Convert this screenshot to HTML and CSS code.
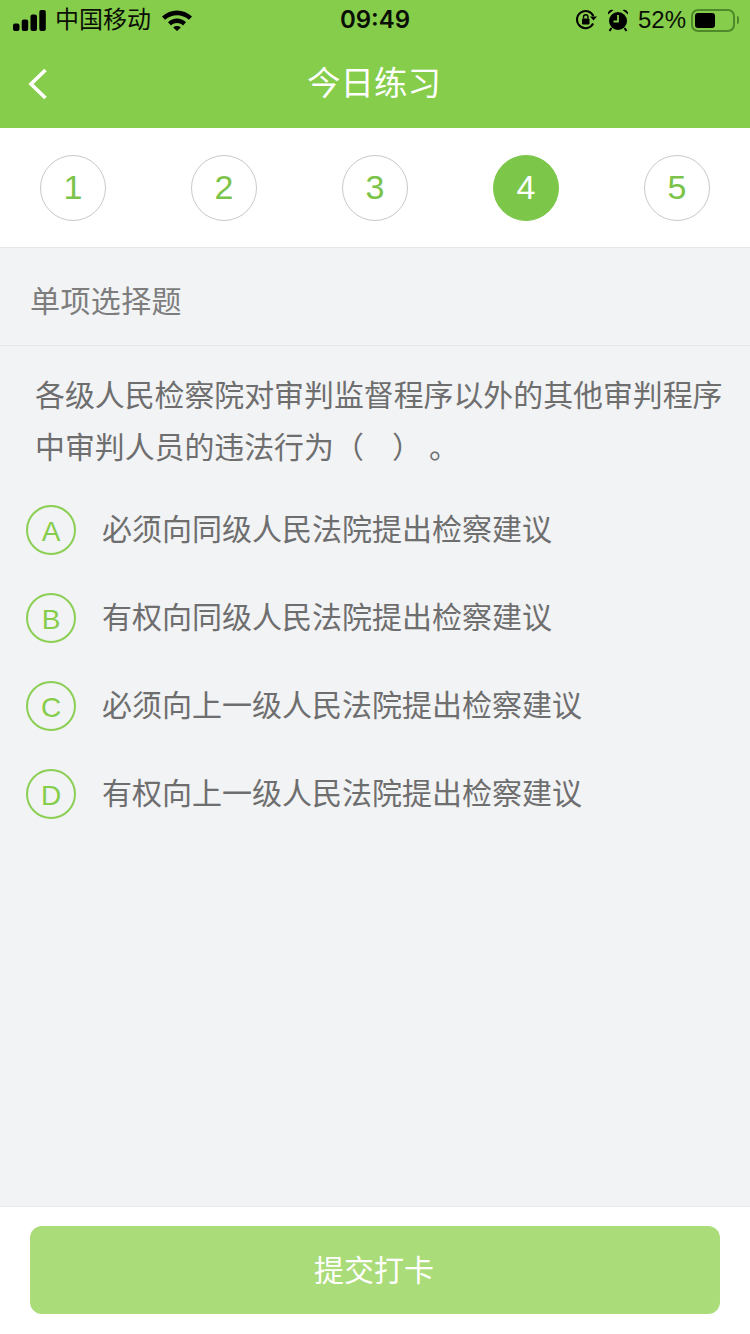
FILE: index.html
```html
<!DOCTYPE html>
<html lang="zh-CN">
<head>
<meta charset="utf-8">
<title>今日练习</title>
<link rel="stylesheet" href="styles.css">
</head>
<body>
<div class="page">
  <header class="head">
    <div class="status">
      <div class="status-left">
        <svg class="signal" width="36" height="23" viewBox="0 0 36 23"><rect x="1" y="14.500" width="6.500" height="7.500" rx="2"/><rect x="9.700" y="10.500" width="6.500" height="11.500" rx="2"/><rect x="18.500" y="5.500" width="6.500" height="16.500" rx="2"/><rect x="27.300" y="1" width="6.500" height="21" rx="2"/></svg>
        <span class="carrier">中国移动</span>
        <svg class="wifi" width="30" height="22" viewBox="0 0 30 22"><path d="M0 7.500C8.500-.5 21.500-.5 30 7.500L27 10.800C20.200 4.600 9.800 4.600 3 10.800Z"/><path d="M6 13.200C11.200 8.400 18.800 8.400 24 13.200L21 16.400C17.400 13.200 12.600 13.200 9 16.400Z"/><path d="M11.200 18.400C13.400 16.600 16.600 16.600 18.800 18.400L15 22Z"/></svg>
      </div>
      <div class="time">09:49</div>
      <div class="status-right">
        <svg class="lock" width="22" height="22" viewBox="0 0 22 22"><path d="M18.200 14.500A8.600 8.600 0 1 1 18.400 7" fill="none" stroke="#000" stroke-width="2"/><path d="M15 7.500h7l-3.500 4z"/><rect x="7" y="9.500" width="7.500" height="6" rx="1"/><path d="M8.500 9.500V8a2.200 2.200 0 0 1 4.500 0v1.500" fill="none" stroke="#000" stroke-width="1.400"/></svg>
        <svg class="alarm" width="22" height="24" viewBox="0 0 22 24"><circle cx="11" cy="13" r="9"/><path d="M1 6.500A4 4 0 0 1 6.500 2ZM21 6.500A4 4 0 0 0 15.500 2Z"/><path d="M4.500 20l-2 3M17.500 20l2 3" stroke="#000" stroke-width="2"/><path d="M11 7v6.500H6.500" fill="none" stroke="#86cd4b" stroke-width="1.800"/></svg>
        <span class="pct">52%</span>
        <div class="battery"><div class="battery-fill"></div></div>
        <div class="battery-tip"></div>
      </div>
    </div>
    <nav class="nav">
      <svg class="back" width="22" height="34" viewBox="0 0 22 34"><path d="M18.500 3L4 17l14.500 14" fill="none" stroke="#fff" stroke-width="3.600"/></svg>
      <h1 class="title">今日练习</h1>
    </nav>
  </header>

  <section class="steps">
    <div class="step">1</div>
    <div class="step">2</div>
    <div class="step">3</div>
    <div class="step step-on">4</div>
    <div class="step">5</div>
  </section>

  <main class="main">
    <div class="kind">单项选择题</div>
    <p class="question">各级人民检察院对审判监督程序以外的其他审判程序中审判人员的违法行为（&nbsp;&nbsp;&nbsp;&nbsp;）&nbsp;。</p>
    <ul class="options">
      <li class="option"><span class="letter">A</span><span class="opt-text">必须向同级人民法院提出检察建议</span></li>
      <li class="option"><span class="letter">B</span><span class="opt-text">有权向同级人民法院提出检察建议</span></li>
      <li class="option"><span class="letter">C</span><span class="opt-text">必须向上一级人民法院提出检察建议</span></li>
      <li class="option"><span class="letter">D</span><span class="opt-text">有权向上一级人民法院提出检察建议</span></li>
    </ul>
  </main>

  <footer class="foot">
    <button class="submit" type="button">提交打卡</button>
  </footer>
</div>
</body>
</html>
```
FILE: styles.css
```css
* { box-sizing: border-box; }
html, body { margin: 0; padding: 0; }
body {
  width: 750px;
  height: 1334px;
  overflow: hidden;
  font-family: "Liberation Sans", "Noto Sans CJK SC", sans-serif;
  background: #f2f3f5;
}
.page { display: flex; flex-direction: column; height: 1334px; }

.head { background: #86cd4b; height: 128px; flex: none; }
.status {
  height: 40px;
  display: flex;
  align-items: center;
  justify-content: space-between;
  padding: 0 11px 0 12px;
  color: #0a0f05;
  position: relative;
}
.status-left { display: flex; align-items: center; }
.signal { fill: #000; margin-right: 7px; }
.carrier { font-size: 24px; line-height: 40px; width: 97px; white-space: nowrap; }
.wifi { fill: #000; margin-left: 10px; }
.time {
  position: absolute;
  left: 0; right: 0;
  text-align: center;
  font-family: "Inter", "Liberation Sans", sans-serif;
  font-size: 24px;
  font-weight: 600;
  line-height: 40px;
}
.status-right { display: flex; align-items: center; }
.lock { margin-right: 10px; }
.alarm { margin-right: 9px; }
.pct { font-size: 24px; line-height: 40px; margin-right: 5px; }
.battery {
  width: 44px;
  height: 23px;
  border: 2px solid #4f8a2a;
  border-radius: 7px;
  padding: 2px;
}
.battery-fill { width: 20px; height: 100%; background: #000; border-radius: 3px; }
.battery-tip { width: 2px; height: 8px; background: #4f8a2a; border-radius: 0 2px 2px 0; margin-left: 2px; }

.nav {
  height: 88px;
  position: relative;
  display: flex;
  align-items: center;
  justify-content: center;
  padding-right: 2px;
}
.back { position: absolute; left: 27px; top: 27px; }
.title {
  margin: 0;
  font-size: 33.500px;
  font-weight: 400;
  color: #fff;
  line-height: 88px;
}

.steps {
  flex: none;
  height: 120px;
  background: #fff;
  border-bottom: 1px solid #e6e7e9;
  display: flex;
  align-items: flex-start;
  justify-content: space-between;
  padding: 27px 40px 0;
}
.step {
  width: 66px;
  height: 66px;
  border: 1px solid #c9c9c9;
  border-radius: 50%;
  display: flex;
  align-items: center;
  justify-content: center;
  font-size: 34px;
  color: #7cc34a;
  padding-bottom: 2px;
}
.step-on { background: #7cc74a; border-color: #7cc74a; color: #fff; }

.main { flex: 1; min-height: 0; }
.kind {
  height: 98px;
  padding: 0 30px;
  border-bottom: 1px solid #e6e7e9;
  font-size: 30px;
  letter-spacing: 0.400px;
  line-height: 108px;
  color: #7d7d7d;
}
.question {
  margin: 0;
  padding: 24px 20px 0 35px;
  font-size: 29.900px;
  line-height: 52px;
  color: #6e6e6e;
  word-spacing: -1.250px;
}
.options { list-style: none; margin: 0; padding: 12px 0 0 26px; }
.option { height: 88px; display: flex; align-items: center; }
.letter {
  width: 50px;
  height: 50px;
  flex: none;
  border: 2px solid #8bcf55;
  border-radius: 50%;
  display: flex;
  align-items: center;
  justify-content: center;
  font-size: 28px;
  color: #86cd4b;
  margin-right: 26px;
  padding-top: 3px;
}
.opt-text { font-size: 30px; color: #6e6e6e; line-height: 50px; }

.foot {
  flex: none;
  height: 128px;
  background: #fff;
  border-top: 1px solid #e9eaec;
  padding: 19px 30px 0;
}
.submit {
  display: block;
  width: 690px;
  height: 88px;
  border: 0;
  border-radius: 12px;
  background: #aadc79;
  color: #fff;
  font-family: inherit;
  font-size: 30px;
  padding: 0 2px 4px 0;
}
```
